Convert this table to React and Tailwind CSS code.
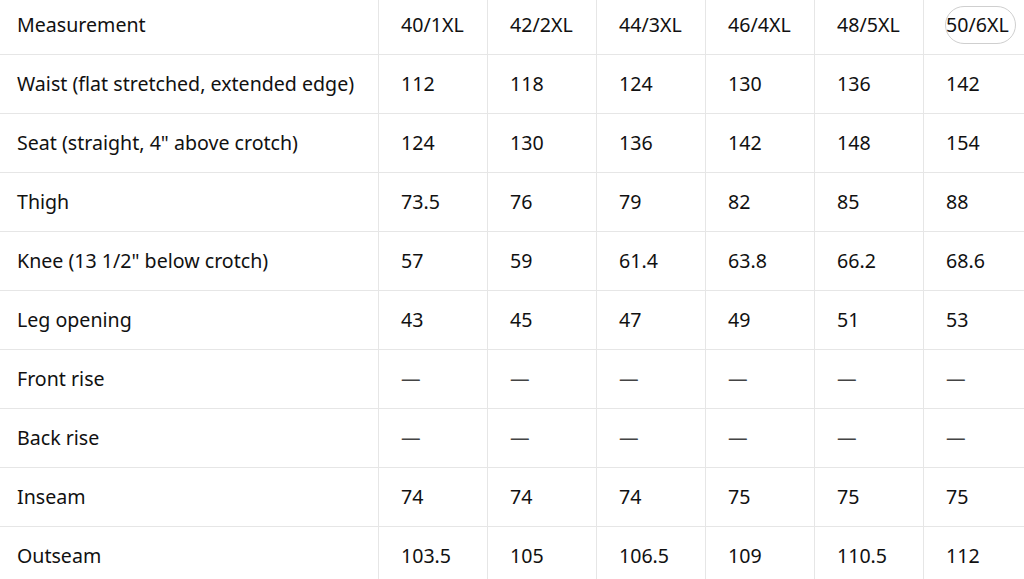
import React from "react";

const sizes = ["40/1XL", "42/2XL", "44/3XL", "46/4XL", "48/5XL", "50/6XL"];

const rows = [
  ["Waist (flat stretched, extended edge)", "112", "118", "124", "130", "136", "142"],
  ["Seat (straight, 4\" above crotch)", "124", "130", "136", "142", "148", "154"],
  ["Thigh", "73.5", "76", "79", "82", "85", "88"],
  ["Knee (13 1/2\" below crotch)", "57", "59", "61.4", "63.8", "66.2", "68.6"],
  ["Leg opening", "43", "45", "47", "49", "51", "53"],
  ["Front rise", "—", "—", "—", "—", "—", "—"],
  ["Back rise", "—", "—", "—", "—", "—", "—"],
  ["Inseam", "74", "74", "74", "75", "75", "75"],
  ["Outseam", "103.5", "105", "106.5", "109", "110.5", "112"],
];

const Cell = ({ children, first }) => (
  <div
    className={`h-[59px] flex items-center border-b border-[#e6e6e6] ${
      first ? "pl-[17px]" : "pl-[22px] border-l"
    }`}
  >
    {children}
  </div>
);

export default function App() {
  return (
    <div className="w-[1024px] h-[579px] overflow-hidden bg-white">
      <div
        className="-mt-[4px] grid grid-cols-[378px_repeat(6,109px)] text-[19.6px] text-[#111]"
        style={{ fontFamily: '"Noto Sans", "Open Sans", sans-serif' }}
      >
        <Cell first>Measurement</Cell>
        {sizes.map((s, i) => (
          <Cell key={s}>
            {i === 5 ? (
              <span className="relative">
                {s}
                <span className="absolute -top-[4px] -bottom-[4px] -left-[1px] -right-[7px] rounded-full border border-[#cfcfcf]" />
              </span>
            ) : (
              s
            )}
          </Cell>
        ))}
        {rows.map((r) =>
          r.map((v, i) => (
            <Cell key={r[0] + i} first={i === 0}>
              {v === "—" ? <span className="text-[#444]">{v}</span> : v}
            </Cell>
          ))
        )}
      </div>
    </div>
  );
}
